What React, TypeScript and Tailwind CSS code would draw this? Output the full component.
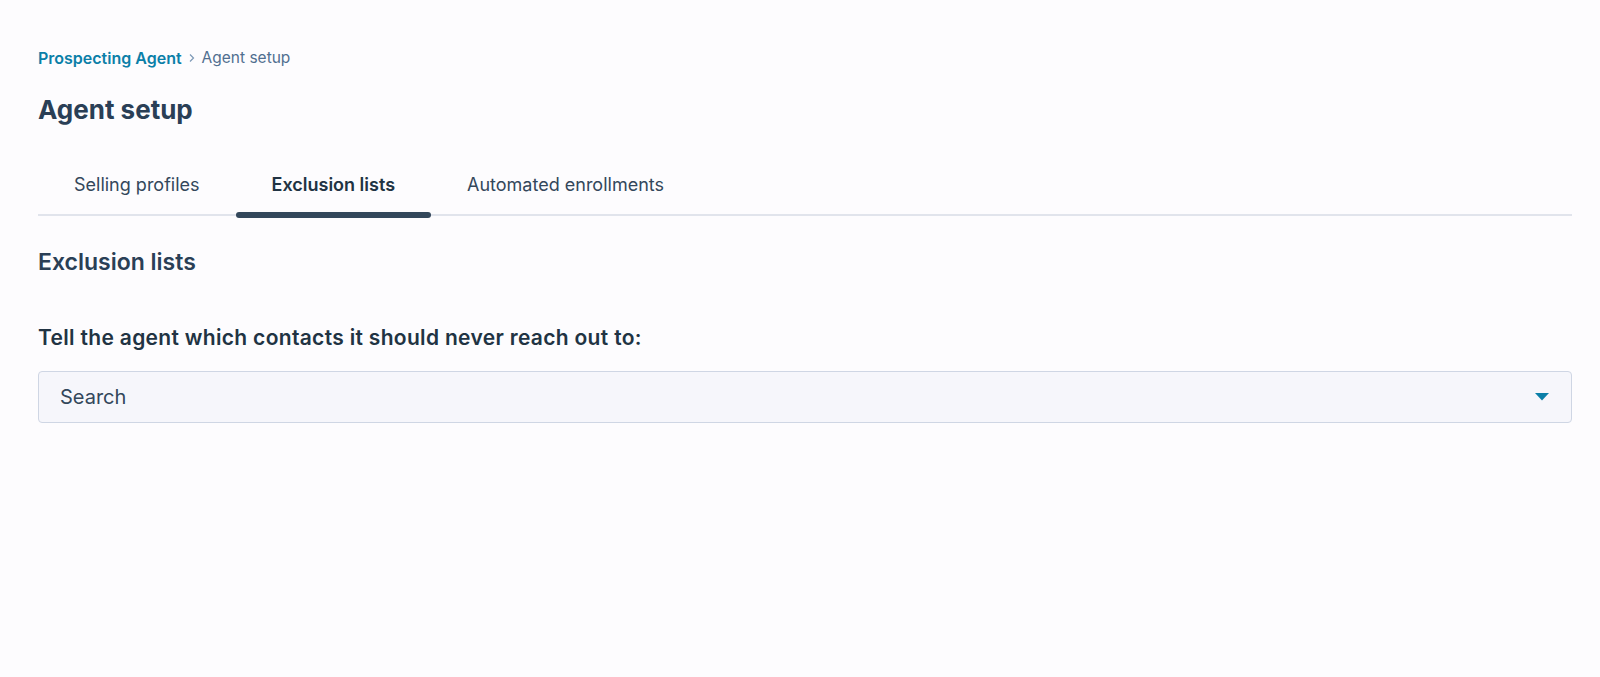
export default function App() {
  const tabs = ["Selling profiles", "Exclusion lists", "Automated enrollments"];
  const active = 1;

  return (
    <div
      className="min-h-[677px] w-full bg-[#fdfcfe] pl-[38px] pr-[28px] pt-[46px] text-[#33475b]"
      style={{ fontFamily: "Inter, 'Noto Sans', sans-serif" }}
    >
      {/* breadcrumb */}
      <div className="flex items-center gap-[6px] text-[16px] leading-[24px]">
        <span className="font-semibold text-[#0b7fa8]">Prospecting Agent</span>
        <svg width="8" height="10" viewBox="0 0 8 10" fill="none">
          <path d="M2 1.5 5.5 5 2 8.5" stroke="#7c98b6" strokeWidth="1.2" />
        </svg>
        <span className="text-[15.5px] text-[#516f90]">Agent setup</span>
      </div>

      <h1 className="mt-[22px] text-[26px] font-bold leading-[36px] text-[#2a3f56]">
        Agent setup
      </h1>

      {/* tabs */}
      <div className="mt-[43px] flex border-b-2 border-[#e1e4ec]">
        {tabs.map((t, i) => (
          <div key={t} className="relative px-[36px] pb-[15px] text-[18px] leading-[28px]">
            <span className={i === active ? "font-semibold text-[#213343]" : "text-[#33475b]"}>
              {t}
            </span>
            {i === active && (
              <div className="absolute bottom-[-4px] left-0 right-0 h-[6px] rounded-full bg-[#33475b]" />
            )}
          </div>
        ))}
      </div>

      <h2 className="mt-[30px] text-[23px] font-semibold leading-[32px] text-[#2a3f56]">
        Exclusion lists
      </h2>

      <div className="mt-[46px] text-[21px] font-semibold leading-[28px] tracking-[0.015em] text-[#213343]">
        Tell the agent which contacts it should never reach out to:
      </div>

      <div className="mt-[19px] flex h-[52px] items-center justify-between rounded-[4px] border border-[#cfd6e4] bg-[#f6f6fb] pl-[21px] pr-[22px]">
        <span className="text-[20px] text-[#33475b]">Search</span>
        <svg width="14" height="8" viewBox="0 0 14 8">
          <path d="M0 0h14L7 7.5z" fill="#0b7fa8" />
        </svg>
      </div>
    </div>
  );
}
